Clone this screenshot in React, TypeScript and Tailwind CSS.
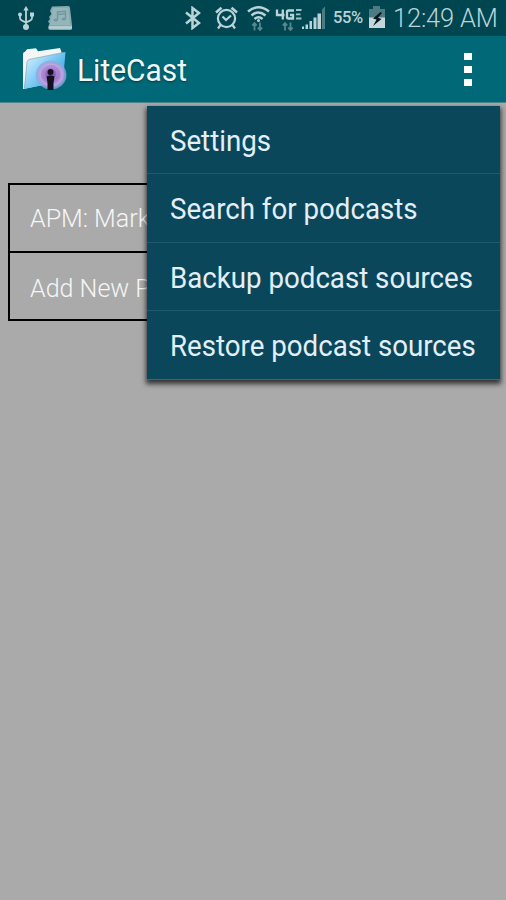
import React from 'react';

const menuItems = ['Settings', 'Search for podcasts', 'Backup podcast sources', 'Restore podcast sources'];
const sources = ['APM: Mark', 'Add New P'];

const UsbIcon = () => (
  <svg className="ml-[17px] h-[26px] w-[18px] shrink-0" viewBox="0 0 18 26" fill="none" stroke="#b9d3d8" strokeWidth="1.8">
    <path d="M9 4v18M3 10v3q0 2 2 2.600l4 1.900 4-1.900q2-.6 2-2.600v-3" />
    <g fill="#b9d3d8" stroke="none">
      <path d="M9 1l2.700 4.500H6.300z" />
      <circle cx="3" cy="9.500" r="2" />
      <path d="M13 7.500h4v4h-4z" />
      <circle cx="9" cy="22" r="3" />
    </g>
  </svg>
);

const MusicFileIcon = () => (
  <svg className="ml-[12px] h-[26px] w-[26px] shrink-0" viewBox="0 0 26 26">
    <path d="M5 1.500L21 1q2 0 2 2l2 17v3.500q0 1.500-2 1.500L3 25q-2-.3-2-2.500l1.500-4-1.500-2 2-2.500-1-2L4.500 9 3 6z" fill="#86aaaf" />
    <path d="M6 3h15l2 17H3z" fill="#94b5ba" />
    <path d="M2 22.500h23" stroke="#b9d0d3" strokeWidth="2.500" />
    <path d="M10.500 15V7l8-.7V14M10.500 9.500l8-.7" fill="none" stroke="#72999f" strokeWidth="1.400" />
    <ellipse cx="8.800" cy="15" rx="2.200" ry="1.600" fill="#72999f" />
    <ellipse cx="16.800" cy="14" rx="2.200" ry="1.600" fill="#72999f" />
  </svg>
);

const BluetoothIcon = () => (
  <svg className="h-[24px] w-[18px] shrink-0" viewBox="0 0 18 24" fill="none" stroke="#b9d3d8" strokeWidth="2.500">
    <path d="M3 6.500l13 10.500-6.500 5V2L16 7 3 17.500" />
  </svg>
);

const AlarmIcon = () => (
  <svg className="ml-[13px] h-[24px] w-[24px] shrink-0" viewBox="0 0 24 24" fill="none" stroke="#b9d3d8" strokeWidth="2.200">
    <circle cx="12.500" cy="12.500" r="8.600" />
    <path d="M8.500 10.500l3.500 3.500 5-4.500M6.500 19L4 22.500M18.500 19l2.500 3.500" />
    <path d="M2 6.500L7.500 1.800M23 6.500L17.500 1.800" strokeWidth="2.600" />
  </svg>
);

const DataArrows = () => (
  <g stroke="#57878f" strokeWidth="1.800" fill="none">
    <path d="M8.500 25.500v-7.500M6.300 20.500l2.200-2.500 2.200 2.500M14 17.500V25M11.800 22.500l2.200 2.500 2.200-2.500" />
  </g>
);

const WifiIcon = () => (
  <svg className="ml-[8px] h-[26px] w-[24px] shrink-0" viewBox="0 0 24 26" fill="none" stroke="#b9d3d8" strokeWidth="2.500">
    <path d="M2 6.500q10.500-8.500 21 0M5.500 10.500q7-6 14 0M8.500 14q4-3.500 8 0" />
    <circle cx="12.500" cy="15.500" r="1.500" fill="#b9d3d8" stroke="none" />
    <DataArrows />
  </svg>
);

const NetworkIcon = () => (
  <svg className="ml-[4px] h-[26px] w-[28px] shrink-0" viewBox="0 0 28 26" fill="none">
    <path d="M3 4.500v5.500H10.500M8.800 4.500v10M20 5.500h-5.500q-1.500 0-1.500 1.500v5q0 1.500 1.500 1.500h4.500V10H16" stroke="#b9d3d8" strokeWidth="2.300" />
    <path d="M22 5h5.500M22 9.300h4.500M22 13.500h5.500" stroke="#a1c1c7" strokeWidth="1.800" />
    <g transform="translate(2.500 0)">
      <DataArrows />
    </g>
  </svg>
);

const SignalIcon = () => (
  <svg className="h-[26px] w-[23px] shrink-0" viewBox="0 0 23 26">
    <path d="M0 21.500h2V24H0zM3.500 19.500h2.500V24H3.500zM7.500 16h2.500v8H7.500zM11.500 12.500h3V24h-3zM15.500 8.500H19V24h-3.500z" fill="#b9d3d8" />
    <path d="M20 4.500L23 1.500V24h-3z" fill="#4c7b83" />
  </svg>
);

const BatteryIcon = () => (
  <svg className="ml-[4px] h-[24px] w-[18px] shrink-0" viewBox="0 0 18 24">
    <path d="M5 0h7v3h5v9H1V3h4z" fill="#4c7b83" />
    <path d="M1 11.500h16V22H1z" fill="#c4d8db" />
    <path d="M12.500 6L5 12.500l3.500 1L5 20l8.500-7-3.500-1.200L14 7z" fill="#06191d" />
  </svg>
);

const FolderLogo = () => (
  <svg className="ml-[22px] h-[44px] w-[46px] shrink-0" viewBox="0 0 46 44">
    <defs>
      <linearGradient id="folder" x1="0" y1="0" x2="1" y2="0.8">
        <stop offset="0" stopColor="#dff5ff" />
        <stop offset="0.450" stopColor="#8bd2f6" />
        <stop offset="1" stopColor="#249bdc" />
      </linearGradient>
      <radialGradient id="glow">
        <stop offset="0" stopColor="#7443a2" />
        <stop offset="0.400" stopColor="#9c75c8" />
        <stop offset="0.750" stopColor="#b59fe0" />
        <stop offset="1" stopColor="#86a9df" stopOpacity="0.700" />
      </radialGradient>
    </defs>
    <path d="M1 7q0-2 2-2.300l2-2.500 9-1 2 3L38 1l1.500 4v29L1 42z" fill="#f4f6f6" />
    <path d="M5 15q0-2 3-2.700L43.500 5 41 34 2 42z" fill="url(#folder)" />
    <path d="M2.500 41L5 15q0-2 3-2.700L41 5.500" fill="none" stroke="#8da6ae" strokeWidth="0.700" />
    <ellipse cx="29" cy="28" rx="15.500" ry="14.500" fill="url(#glow)" />
    <ellipse cx="29" cy="27.500" rx="11" ry="10.500" fill="none" stroke="#c9addf" strokeWidth="0.800" />
    <circle cx="28.500" cy="26.500" r="6.500" fill="none" stroke="#b48fd4" strokeWidth="0.800" />
    <circle cx="28.500" cy="25" r="3" fill="#151020" />
    <path d="M24.500 29.500q4-2 8 0L31.500 36v7h-6v-7z" fill="#151020" />
  </svg>
);

const StatusBar = () => (
  <div className="flex h-[36px] items-center bg-[#004651] text-[#b9d3d8]">
    <UsbIcon />
    <MusicFileIcon />
    <div className="flex flex-1 items-center justify-end pr-[8px]">
      <BluetoothIcon />
      <AlarmIcon />
      <WifiIcon />
      <NetworkIcon />
      <SignalIcon />
      <span className="ml-[8px] w-[31px] whitespace-nowrap pt-px text-[16.5px] font-medium tracking-[-0.4px]">55%</span>
      <BatteryIcon />
      <span className="ml-[7px] w-[105px] whitespace-nowrap pt-px text-[25.5px] font-light tracking-[-0.2px]">12:49 AM</span>
    </div>
  </div>
);

const AppBar = () => (
  <div className="flex h-[67px] items-center border-b border-[#4d858d] bg-[#006876] pr-[34px]">
    <FolderLogo />
    <h1 className="ml-[9px] flex-1 origin-left scale-x-[0.965] pt-[4px] text-[31px] text-[#eef7f8] [text-shadow:0_1px_2px_#003d46]">LiteCast</h1>
    <div className="flex flex-col gap-[6px]">
      <span className="h-[7px] w-[8px] bg-white" />
      <span className="h-[7px] w-[8px] bg-white" />
      <span className="h-[7px] w-[8px] bg-white" />
    </div>
  </div>
);

const OverflowMenu = () => (
  <div className="absolute top-[106px] left-[147px] w-[353px] border-b border-[#287181] bg-[#0a475b] shadow-[0_3px_5px_1px_rgba(0,0,0,0.7)]">
    {menuItems.map((item) => (
      <div key={item} className="flex h-[68.3px] items-center border-b border-[#205b6d] pt-[3px] pl-[23px] last:border-b-0">
        <span className="origin-left scale-x-[0.938] text-[29.5px] whitespace-nowrap text-[#e3eff8]">{item}</span>
      </div>
    ))}
  </div>
);

export default function App() {
  return (
    <div className="relative h-[900px] w-[506px] overflow-hidden bg-[#aaaaaa] font-['Roboto',sans-serif]">
      <StatusBar />
      <AppBar />
      <div className="mx-[8px] mt-[80px] border-2 border-black">
        {sources.map((source) => (
          <div
            key={source}
            className="flex h-[68px] items-center border-b-2 border-black pl-[20px] last:h-[66px] last:border-b-0 last:pt-[4px]"
          >
            <span className="origin-left scale-x-[0.945] text-[26.5px] font-light whitespace-nowrap text-[#f5f5f5]">{source}</span>
          </div>
        ))}
      </div>
      <OverflowMenu />
    </div>
  );
}
